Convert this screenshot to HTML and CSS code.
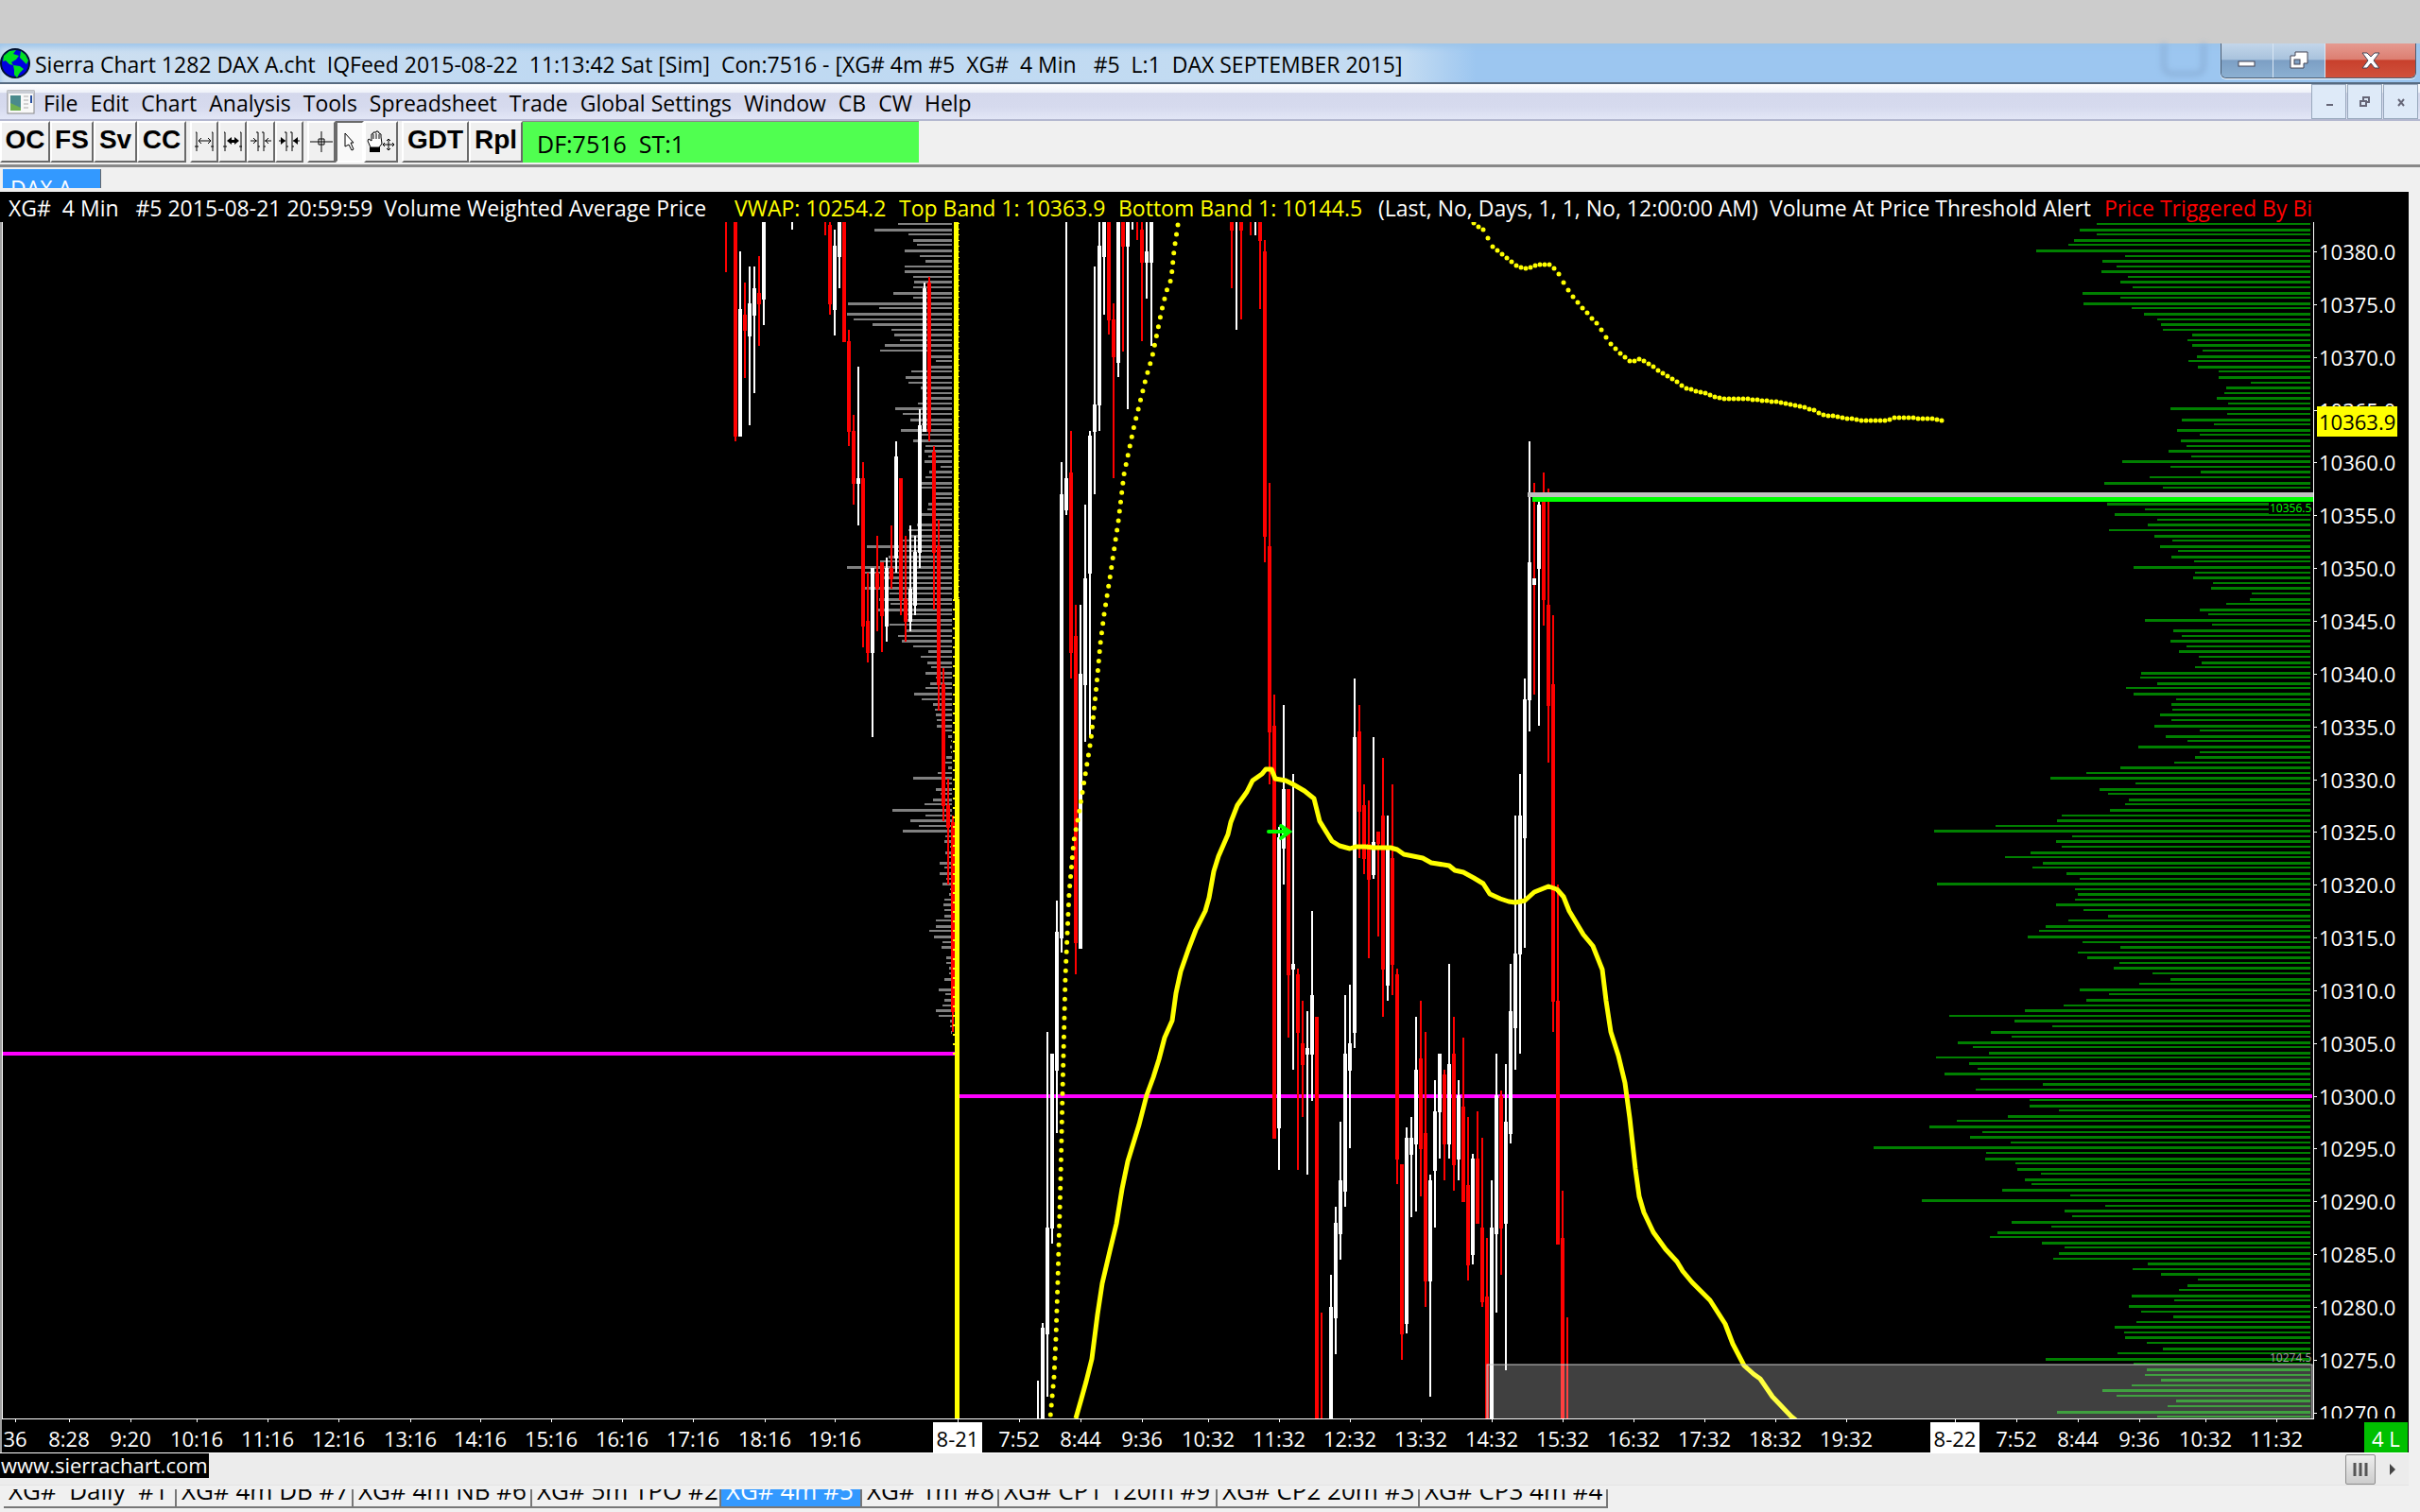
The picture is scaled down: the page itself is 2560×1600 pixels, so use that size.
FILE: index.html
```html
<!DOCTYPE html>
<html lang="en">
<head>
    <meta charset="UTF-8">
    <title>Sierra Chart - DAX A.cht</title>
    <link rel="stylesheet" href="styles.css">
</head>
<body>

    <div class="desktop-strip"></div>

    <header class="title-bar">
        <svg class="globe" viewBox="0 0 32 32">
            <circle cx="16" cy="16" r="15" fill="#0000e0" stroke="#001030" stroke-width="2"/>
            <path d="M4 8 L10 3 L17 2 L14 6 L20 8 L17 12 L12 15 L14 18 L10 17 L6 13 L3 14 Z" fill="#00e020"/>
            <path d="M22 3 L27 7 L30 13 L28 17 L24 13 L21 10 Z" fill="#00e020"/>
            <path d="M14 18 L21 19 L25 22 L21 26 L18 31 L15 28 L15 23 Z" fill="#00e020"/>
        </svg>
        <h1 class="title">Sierra Chart 1282 DAX A.cht  IQFeed 2015-08-22  11:13:42 Sat [Sim]  Con:7516 - [XG# 4m #5  XG#  4 Min   #5  L:1  DAX SEPTEMBER 2015]</h1>
        <div class="glass-shadow"></div>
        <div class="window-buttons">
            <button class="win-btn" aria-label="Minimize">
                <svg width="20" height="16"><rect x="1" y="9" width="17" height="5" fill="#fff" stroke="#445" /></svg>
            </button>
            <button class="win-btn" aria-label="Restore">
                <svg width="20" height="20"><path d="M6 1H19V13H15V18H1V5H6Z" fill="#fff" stroke="#445"/><rect x="5" y="9" width="6" height="5" fill="#7fa0c4" stroke="#445"/></svg>
            </button>
            <button class="win-btn win-close" aria-label="Close">
                <svg width="20" height="18"><path d="M1 1H6L10 5L14 1H19L13 9L19 17H14L10 12L6 17H1L7 9Z" fill="#fff" stroke="#445"/></svg>
            </button>
        </div>
    </header>

    <nav class="menu-bar">
        <svg class="doc-icon" viewBox="0 0 30 26">
            <rect x="1" y="1" width="28" height="24" fill="#f8f8f8" stroke="#888"/>
            <rect x="1" y="1" width="28" height="3" fill="#c8ccd4"/>
            <rect x="4" y="6" width="11" height="16" fill="#4a8a8c"/>
            <path d="M4 22V14L15 19V22Z" fill="#6fb050"/>
            <path d="M18 7H23M18 11H23M18 15H23M18 19H23" stroke="#aaa"/>
            <path d="M26 6V14" stroke="#2a50a0" stroke-width="2"/>
        </svg>
        <button class="menu-item">File</button>
        <button class="menu-item">Edit</button>
        <button class="menu-item">Chart</button>
        <button class="menu-item">Analysis</button>
        <button class="menu-item">Tools</button>
        <button class="menu-item">Spreadsheet</button>
        <button class="menu-item">Trade</button>
        <button class="menu-item">Global Settings</button>
        <button class="menu-item">Window</button>
        <button class="menu-item">CB</button>
        <button class="menu-item">CW</button>
        <button class="menu-item">Help</button>
        <div class="mdi-buttons">
            <button class="mdi-btn" aria-label="Minimize chart"><svg width="12" height="12"><rect x="3" y="8" width="7" height="2" fill="#667"/></svg></button>
            <button class="mdi-btn" aria-label="Restore chart"><svg width="12" height="12"><path d="M4 4V1H10V6H8M1 5H7V10H1Z" fill="none" stroke="#667" stroke-width="2"/></svg></button>
            <button class="mdi-btn" aria-label="Close chart"><svg width="12" height="12"><path d="M3 3L9 10M9 3L3 10" stroke="#667" stroke-width="2"/></svg></button>
        </div>
    </nav>

    <div class="toolbar">
        <div class="tool-group text-group">
            <button class="tool">OC</button>
            <button class="tool">FS</button>
            <button class="tool">Sv</button>
            <button class="tool">CC</button>
        </div>
        <div class="tool-group icon-group">
            <button class="tool" aria-label="Increase bar spacing">
                <svg width="20" height="22"><path d="M1 1H2V21M0 16H4M18 1H19V21M17 16H20M4 10H17M7 7L4 10L7 13M14 7L17 10L14 13" fill="none" stroke="#000"/></svg>
            </button>
            <button class="tool" aria-label="Increase bar width">
                <svg width="20" height="22"><path d="M1 1H2V21M0 16H4M18 1H19V21M17 16H20" fill="none" stroke="#000"/><path d="M4 10L9 6V9H12V6L17 10L12 14V12H9V14Z"/></svg>
            </button>
            <button class="tool" aria-label="Decrease bar spacing">
                <svg width="22" height="22"><path d="M8 1V21M6 1H8M8 16H10M14 1V21M12 1H14M14 16H16M0 10H7M3 7L6 10L3 13M22 10H15M19 7L16 10L19 13" fill="none" stroke="#000"/></svg>
            </button>
            <button class="tool" aria-label="Decrease bar width">
                <svg width="22" height="22"><path d="M8 1V21M6 1H8M8 16H10M14 1V21M12 1H14M14 16H16M0 10H7M22 10H15" fill="none" stroke="#000"/><path d="M2 6L7 10L2 14ZM20 6L15 10L20 14Z"/></svg>
            </button>
        </div>
        <div class="tool-group pointer-group">
            <button class="tool" aria-label="Crosshair">
                <svg width="24" height="22"><path d="M0 11H24M12 0V22M9 8H15V14H9Z" fill="none" stroke="#000"/></svg>
            </button>
            <button class="tool pressed" aria-label="Pointer">
                <svg width="14" height="20"><path d="M2 1L11 11H8L11 18L9 19L6 13L2 15Z" fill="#fff" stroke="#000"/></svg>
            </button>
            <button class="tool" aria-label="Hand">
                <svg width="30" height="24">
                    <path d="M4 18L1 11L2 9L5 11V4L7 3V2H10V1H12L13 3L15 4V7L16 14L13 18Z" fill="#fff" stroke="#000"/>
                    <path d="M7 4V9M10 3V9M13 4V9" stroke="#000"/>
                    <rect x="3" y="18" width="11" height="5"/>
                    <path d="M23 9V21M17 15H29M21 11L23 9L25 11M21 19L23 21L25 19M19 13L17 15L19 17M27 13L29 15L27 17" fill="none" stroke="#000"/>
                </svg>
            </button>
        </div>
        <div class="tool-group end-group">
            <button class="tool">GDT</button>
            <button class="tool">Rpl</button>
        </div>
        <div class="feed-status">DF:7516  ST:1</div>
    </div>

    <div class="book-tabs">
        <button class="book-tab">DAX A</button>
    </div>

    <main class="chart-window">
        <div class="study-line">
            <span>XG#  4 Min   #5 2015-08-21 20:59:59  Volume Weighted Average Price</span>
            <span class="band">VWAP: 10254.2</span>
            <span class="band">Top Band 1: 10363.9</span>
            <span class="band">Bottom Band 1: 10144.5</span>
            <span>(Last, No, Days, 1, 1, No, 12:00:00 AM)</span>
            <span>Volume At Price Threshold Alert</span>
            <span class="alert">Price Triggered By Bi</span>
        </div>
        <svg id="chart" class="chart" viewBox="0 235 2548 1302"></svg>
    </main>

    <div class="scroll-row">
        <a class="site-link" href="#">www.sierrachart.com</a>
        <button class="thumb" aria-label="Scroll thumb">
            <svg width="16" height="14"><path d="M2 0V14M8 0V14M14 0V14" stroke="#555" stroke-width="3"/></svg>
        </button>
        <button class="scroll-right" aria-label="Scroll right">
            <svg width="8" height="12"><path d="M1 0L7 6L1 12Z" fill="#444"/></svg>
        </button>
    </div>

    <footer class="chart-tabs">
        <button class="chart-tab">XG#  Daily  #1</button>
        <button class="chart-tab">XG# 4m DB #7</button>
        <button class="chart-tab">XG# 4m NB #6</button>
        <button class="chart-tab">XG# 5m TPO #2</button>
        <button class="chart-tab active">XG# 4m #5</button>
        <button class="chart-tab">XG# 1m #8</button>
        <button class="chart-tab">XG# CP1 120m #9</button>
        <button class="chart-tab">XG# CP2 20m #3</button>
        <button class="chart-tab">XG# CP3 4m #4</button>
    </footer>

    <script src="chart.js"></script>
</body>
</html>
```
FILE: styles.css
```css
* { box-sizing: border-box; }
body { margin: 0; background: #f0f0f0; font-family: "Open Sans", "Noto Sans", sans-serif; font-size: 23px; color: #000; overflow: hidden; }
button { font: inherit; color: inherit; margin: 0; padding: 0; border: 0; background: none; white-space: pre; }

.desktop-strip { height: 46px; background: #ccc; }

/* title bar */
.title-bar { display: flex; align-items: flex-start; height: 43px; border-bottom: 2px solid #566a80; background: linear-gradient(90deg, #cfe0f0 0, #bdd8f2 25%, #c4dcf2 58%, #9cc6f0 61%, #9cc6f0 100%); box-shadow: inset 0 4px 6px #9cc4ea; }
.globe { width: 32px; height: 32px; margin-top: 5px; flex: none; }
.title { flex: 1; margin: 0; padding-left: 5px; font-size: 23px; font-weight: normal; line-height: 45px; height: 41px; white-space: pre; overflow: hidden; }
.glass-shadow { width: 46px; height: 34px; margin-right: 16px; border: 4px solid #88acd4; border-top: 0; border-radius: 0 0 10px 10px; filter: blur(3px); }
.window-buttons { display: flex; height: 37px; margin-right: 4px; border: 1px solid #4a5c72; border-top: 0; border-radius: 0 0 6px 6px; overflow: hidden; box-shadow: 0 1px 1px #fff; }
.win-btn { display: flex; align-items: center; justify-content: center; width: 55px; border-right: 1px solid #d8e6f4; background: linear-gradient(#c3d6ea 0, #a9c3dd 46%, #7c9fc4 50%, #8cb0d2 100%); }
.win-close { width: 95px; border-right: 0; background: linear-gradient(#e59a90 0, #dc7f72 46%, #c8402c 50%, #d0513c 100%); }

/* menu */
.menu-bar { display: flex; align-items: center; gap: 13px; height: 39px; padding-left: 7px; border-bottom: 2px solid #b4b8d0; background: linear-gradient(#fff 0, #eef1f9 24%, #d4d8ec 26%, #d6daee 65%, #e2e6f6 100%); }
.doc-icon { width: 30px; height: 26px; margin-right: -4px; }
.menu-item { padding-top: 2px; line-height: 30px; }
.mdi-buttons { display: flex; align-self: stretch; gap: 1px; margin-left: auto; margin-right: 2px; }
.mdi-btn { display: flex; align-items: center; justify-content: center; width: 37px; border: 1px solid #98a8bc; background: #deeaf8; }

/* toolbar */
.toolbar { display: flex; gap: 4px; height: 49px; padding-bottom: 3px; border-bottom: 3px solid #888; }
.tool-group { display: grid; height: 44px; }
.text-group { grid-template-columns: 53px 46px 46px 52px; }
.icon-group { grid-template-columns: repeat(4, 30px); }
.pointer-group { grid-template-columns: 30px 30px 36px; }
.end-group { grid-template-columns: 71px 57px; }
.tool { display: flex; align-items: center; justify-content: center; border: 2px solid; border-color: #fff #6a6a6a #6a6a6a #fff; background: #f0f0f0; font-family: "Liberation Sans", Arial, sans-serif; font-size: 28px; font-weight: bold; line-height: 36px; }
.text-group .tool, .end-group .tool { padding-bottom: 4px; }
.pressed { border-color: #6a6a6a #fff #fff #6a6a6a; background: #f9f9f9; }
.feed-status { width: 419px; height: 44px; margin-left: -4px; padding-left: 15px; border-top: 1px solid #888; background: #50ff50; font-size: 25px; line-height: 46px; white-space: pre; }

.book-tabs { height: 26px; padding: 2px 3px 0; }
.book-tab { display: block; width: 104px; height: 20px; padding: 8px 0 0 8px; border-right: 1px solid #666; overflow: hidden; background: #3399ff; color: #fff; line-height: 24px; text-align: left; }

/* chart */
.chart-window { padding-right: 12px; }
.study-line { display: grid; grid-template-columns: 768px 174px 232px 275px 414px 354px 1fr; height: 32px; padding-left: 9px; padding-right: 103px; background: #000; color: #fff; line-height: 34px; white-space: pre; overflow: hidden; }
.study-line span { overflow: hidden; }
.band { color: #ff0; }
.alert { color: #f00; }
.chart { display: block; width: 100%; height: auto; background: #000; }
.chart text { font-size: 22px; fill: #fff; }
.chart .small { font-size: 12px; }

/* scrollbar and tabs */
.scroll-row { display: flex; height: 35px; margin-right: 12px; border-top: 1px solid #fff; border-bottom: 1px solid #e4e4e4; background: #ececec; }
.site-link { height: 26px; padding: 0 1px; margin-right: auto; background: #000; color: #fff; font-size: 22px; line-height: 24px; text-decoration: none; }
.thumb, .scroll-right { display: flex; align-items: center; justify-content: center; height: 32px; margin-top: 1px; }
.thumb { width: 32px; border: 1px solid #8c8c8c; border-radius: 2px; background: linear-gradient(#eee, #ccc); }
.scroll-right { width: 35px; }
.chart-tabs { display: grid; grid-template-columns: 183px 187px 189px 200px 149px 145px 231px 214px 199px; padding: 4px 0 4px 4px; }
.chart-tab { display: flex; align-items: flex-start; height: 20px; padding-left: 5px; border-right: 2px solid #777; border-bottom: 2px solid #777; overflow: hidden; font-size: 26px; line-height: 2px; }
.active { background: #3399ff; color: #fff; }
```
FILE: chart.js
```js
const TOP = 235;
const BOTTOM = 1501;
const STEP = 5.585; // half a point
const out = [];

function rect(x, y, w, h, fill, extra = '') {
    out.push(`<rect x="${x}" y="${y}" width="${w}" height="${h}" fill="${fill}" ${extra}/>`);
}
function text(x, y, s, attrs = '') {
    out.push(`<text x="${x}" y="${y}" ${attrs}>${s}</text>`);
}

// volume at price, one value per half point from the top down
const prevVolume = [
    171,246,138,123,111,150,102,84,150,150,123,120,123,186,123,330,231,333,312,252,
    192,183,165,213,228,66,51,66,129,147,138,99,81,81,108,180,156,132,96,162,
    96,123,84,87,75,87,36,72,84,96,96,51,51,75,78,96,51,111,138,136,
    156,270,171,201,228,333,276,221,189,276,198,231,195,234,141,141,198,146,171,159,
    123,75,99,78,66,84,51,69,84,120,96,60,54,51,48,48,21,12,3,6,
    3,18,21,12,45,123,18,51,36,60,87,189,84,132,105,156,21,24,6,21,
    9,39,24,39,18,30,6,9,24,27,24,24,51,51,72,57,30,33,0,18,
    18,9,9,24,0,42,21,24,30,51,42,6,6,3
];
const totalVolume = [
    591,638,591,653,669,758,512,575,536,578,505,525,491,630,525,627,494,460,424,413,
    408,327,340,327,298,314,337,311,254,254,165,233,238,259,228,387,230,356,267,369,
    306,358,342,392,329,520,387,303,444,570,408,470,450,562,457,541,424,450,557,431,
    382,416,366,384,322,489,319,324,269,275,162,167,233,306,282,457,272,379,356,387,
    342,363,309,301,319,468,471,424,510,489,371,384,382,416,384,431,306,400,340,476,
    306,319,376,525,620,719,484,583,559,502,512,554,687,701,870,1040,659,703,687,774,
    844,740,768,674,638,1032,651,643,651,703,627,559,669,732,750,782,630,525,643,617,
    528,544,437,387,473,638,557,620,682,789,998,818,714,883,826,975,933,889,1035,944,
    920,1012,912,740,925,925,776,776,695,836,978,1053,907,941,829,1208,897,899,816,810,
    745,789,771,852,664,1074,567,680,659,826,716,865,886,742,680,695,711,450,491,413,
    311,340,363,494,376,502,468,379,481,541,515,512,452,408,533,732,489,452,457,413,
    494,575,536,371,395,701,424
];
function profile(values, right, unit, color) {
    values.forEach((v, i) => {
        const w = Math.round(v / unit);
        rect(right - w, Math.round(236 + i * STEP), w, i % 2 ? 3 : 2, color);
    });
}

// x, high, body top, body bottom, low
const up = [
    [783,266,327,462,462],[793,282,321,356,450],
    [798,282,305,334,416],[808,235,235,317,344],[838,235,0,0,243],[883,243,260,328,355],
    [888,235,235,272,305],[908,388,506,512,556],[923,601,601,691,780],[938,590,601,663,679],
    [948,467,483,591,606],[963,556,623,658,668],[968,567,584,641,651],[973,433,450,585,601],
    [978,299,305,457,457],
    [1098,1461,0,0,1501],[1103,1400,1405,1501,1501],[1108,1092,1299,1412,1478],
    [1113,1115,1115,1300,1316],[1118,953,986,1133,1199],[1123,489,523,993,1008],
    [1128,235,506,540,545],[1143,640,713,1004,1004],[1148,534,612,725,785],
    [1153,456,461,607,780],[1158,282,428,457,523],[1163,235,260,429,456],
    [1168,235,235,272,333],[1183,235,235,384,399],[1193,235,235,261,433],
    [1198,235,0,0,243],[1213,235,266,278,316],[1218,235,235,278,366],
    [1308,235,0,0,349],[1328,235,0,0,249],[1353,875,886,1194,1238],
    [1358,746,835,898,936],[1368,819,1020,1026,1132],[1383,1070,1109,1116,1243],
    [1388,964,1053,1116,1165],[1408,1349,1383,1501,1501],[1413,1277,1294,1395,1433],
    [1418,1187,1249,1306,1333],[1423,1053,1115,1261,1277],[1428,1042,1104,1133,1215],
    [1433,718,780,1093,1109],[1453,780,891,926,930],[1468,863,898,1043,1059],
    [1488,1193,1204,1401,1411],[1493,1182,1204,1222,1288],[1498,1076,1132,1211,1282],
    [1513,1243,1249,1356,1478],[1518,1143,1176,1239,1299],[1523,1115,1115,1177,1226],
    [1533,1020,1126,1211,1226],[1543,1143,1159,1227,1249],[1558,1221,1226,1328,1338],
    [1578,1249,1299,1501,1501],[1583,1115,1159,1306,1389],[1593,1126,1187,1295,1450],
    [1598,1020,1070,1200,1210],[1603,863,1009,1088,1132],[1608,819,863,1010,1115],
    [1613,718,740,887,1003],[1618,467,595,741,774],[1628,531,534,602,768]
];
const down = [
    [768,235,0,0,288],[778,235,235,462,467],[788,299,333,350,400],[803,271,310,322,366],
    [873,235,0,0,249],[878,235,238,322,333],[893,235,235,362,362],[898,349,361,457,472],
    [903,439,456,512,534],[913,489,506,663,685],[918,606,657,691,701],[928,567,606,623,668],
    [933,595,595,652,690],[943,556,601,613,623],[953,506,506,635,651],[958,567,634,658,679],
    [983,293,299,457,467],[988,472,478,585,645],[993,550,578,725,752],[998,707,724,853,869],
    [1003,824,852,876,936],[1008,863,870,1071,1092],
    [1133,456,500,691,718],[1138,640,673,998,1031],[1173,235,235,339,354],
    [1178,321,338,378,506],[1188,235,235,261,372],[1203,235,0,0,254],[1208,235,243,278,361],
    [1303,235,235,244,305],[1313,235,235,244,338],[1323,235,0,0,249],[1333,235,235,255,327],
    [1338,254,266,568,595],[1343,511,578,775,830],[1348,735,768,1205,1205],
    [1363,835,835,1032,1098],[1373,1025,1031,1093,1238],[1378,1059,1104,1127,1182],
    [1393,1076,1076,1501,1501],[1398,1389,0,0,1501],[1438,746,774,859,908],
    [1443,830,852,909,925],[1448,847,893,931,1014],[1458,880,880,893,991],
    [1463,802,863,1026,1076],[1473,830,908,1021,1053],[1478,1025,1031,1227,1253],
    [1483,1232,1232,1412,1439],[1503,1059,1120,1216,1266],[1508,1092,1199,1356,1383],
    [1528,1132,1137,1211,1249],[1538,1076,1115,1233,1260],[1548,1098,1171,1272,1272],
    [1553,1182,1254,1339,1355],[1563,1176,1226,1295,1295],[1568,1204,1299,1378,1383],
    [1573,1310,1372,1501,1501],[1588,1154,1160,1300,1349],[1623,511,0,0,735],
    [1633,500,527,635,662],[1638,517,640,747,807],[1643,651,724,1060,1092],
    [1648,936,1059,1317,1317],[1653,1260,1310,1501,1501],[1658,1394,0,0,1501]
];
function candles(list, color) {
    for (const [x, high, top, bottom, low] of list) {
        rect(x - 1, high, 2, low - high, color);
        if (top) rect(x - 2, top, 4, bottom - top, color);
    }
}

const vwap = [
    [1138,1501],[1144,1480],[1149,1462],[1155,1438],[1161,1391],[1166,1358],[1174,1324],[1181,1295],[1187,1258],
    [1193,1229],[1205,1190],[1213,1159],[1220,1140],[1226,1121],[1232,1098],[1240,1080],[1244,1051],
    [1249,1028],[1257,1005],[1265,984],[1275,964],[1279,950],[1284,922],[1289,906],[1299,883],
    [1302,870],[1309,852],[1319,838],[1325,826],[1335,819],[1339,814],[1345,814],[1349,824],
    [1360,826],[1368,830],[1380,837],[1390,845],[1396,869],[1409,890],[1417,895],[1428,898],
    [1434,896],[1444,896],[1453,897],[1471,897],[1478,899],[1485,904],[1505,908],[1514,913],
    [1533,916],[1539,921],[1548,923],[1559,929],[1569,935],[1576,946],[1587,951],[1596,954],
    [1603,955],[1613,953],[1623,944],[1638,938],[1647,941],[1654,949],[1660,964],[1669,979],
    [1675,989],[1685,1001],[1695,1026],[1699,1059],[1704,1092],[1712,1117],[1719,1146],[1724,1183],
    [1730,1237],[1734,1266],[1739,1283],[1749,1304],[1762,1322],[1774,1335],[1780,1345],[1790,1357],
    [1809,1376],[1825,1401],[1833,1422],[1845,1445],[1855,1454],[1862,1459],[1875,1478],[1895,1499],[1900,1503]
];
const bandLeft = [
    [1246,238],[1242,265],[1239,295],[1234,308],[1229,328],[1219,377],[1212,401],[1199,454],[1189,502],
    [1183,552],[1174,612],[1168,650],[1164,681],[1160,725],[1154,783],[1149,814],[1141,863],[1136,889],
    [1131,945],[1127,1034],[1124,1156],[1122,1246],[1119,1355],[1117,1416],[1115,1457],[1111,1500]
];
const bandRight = [
    [1559,236],[1570,244],[1579,261],[1595,274],[1604,281],[1614,284],[1629,280],[1640,280],[1649,290],
    [1659,307],[1665,315],[1675,327],[1689,342],[1704,364],[1714,374],[1725,383],[1735,380],[1750,389],
    [1769,401],[1784,411],[1804,416],[1815,420],[1825,422],[1848,422],[1869,424],[1890,427],[1909,431],
    [1919,434],[1929,439],[1950,442],[1969,445],[1994,445],[2004,442],[2045,443],[2055,445]
];
function line(points, extra) {
    out.push(`<polyline points="${points.join(' ')}" fill="none" stroke="#ff0" ${extra}/>`);
}
// one dot per bar
function dots(points) {
    let i = 0;
    for (let x = points[0][0]; x <= points[points.length - 1][0]; x += 5) {
        while (points[i + 1][0] < x) i++;
        const [x0, y0] = points[i];
        const [x1, y1] = points[i + 1];
        const y = y0 + (y1 - y0) * (x - x0) / (x1 - x0);
        out.push(`<ellipse cx="${x}" cy="${Math.round(y)}" rx="2.5" ry="2.5" fill="#ff0"/>`);
    }
}

out.push(`<clipPath id="plot"><rect x="3" y="${TOP}" width="2444" height="${BOTTOM - TOP}"/></clipPath>`);
out.push('<g clip-path="url(#plot)">');
rect(3, 1113, 1007, 4, '#f0f');
rect(1015, 1158, 1431, 4, '#f0f');
profile(prevVolume, 1007, 3, '#808080');
profile(totalVolume, 2444, 2.613, '#008000');
rect(1960, 1158, 486, 4, '#f0f');
candles(up, '#fff');
candles(down, '#f00');
rect(1621, 612, 4, 7, '#fff');
rect(1009, TOP, 5, 399, '#ff0');
rect(1010, 634, 5, 867, '#ff0');
line([[1014, 236], [1014, 634]], 'stroke-width="2" stroke-dasharray="1 5"');
line([[1009, 634], [1009, 1120]], 'stroke-width="2" stroke-dasharray="2 8"');
line(bandLeft, 'stroke-width="5" stroke-linecap="round" stroke-dasharray="0 10"');
dots(bandRight);
line(vwap, 'stroke-width="5" stroke-linejoin="round"');
out.push('<path d="M1342 880H1362M1355 874L1364 880L1355 887" fill="none" stroke="#0f0" stroke-width="4" stroke-linecap="round"/>');
rect(1616, 521, 831, 5, '#c0c0c0');
rect(1621, 526, 826, 5, '#0f0');
rect(1573, 1444, 873, 58, '#fff', 'fill-opacity="0.25" stroke="#ccc"');
rect(1576, 1445, 4, 56, '#fff');
rect(2400, 532, 46, 12, '#000');
text(2401, 542, '10356.5', 'class="small" style="fill:#0f0"');
text(2401, 1441, '10274.5', 'class="small" style="fill:#a0a0a0"');
out.push('</g>');

// axes
rect(2447, TOP, 1, 1267, '#fff');
rect(3, BOTTOM, 2445, 1, '#fff');
rect(2, TOP, 1, 1267, '#fff');
rect(0, TOP, 2, 1302, '#a0a0a0');
out.push(`<clipPath id="scale"><rect x="2447" y="${TOP}" width="101" height="${BOTTOM - TOP}"/></clipPath>`);
out.push('<g clip-path="url(#scale)">');
for (let p = 10380; p >= 10270; p -= 5) {
    const y = Math.round(266 + (10380 - p) * 2 * STEP);
    rect(2447, y, 4, 1, '#fff');
    text(2453, y + 9, p.toFixed(1));
}
out.push('</g>');
rect(2451, 430, 85, 32, '#ff0');
text(2453, 455, '10363.9', 'style="fill:#000"');

const times = [
    [16,'36'],[73,'8:28'],[138,'9:20'],[208,'10:16'],[283,'11:16'],[358,'12:16'],[434,'13:16'],
    [508,'14:16'],[583,'15:16'],[658,'16:16'],[733,'17:16'],[809,'18:16'],[883,'19:16'],
    [1013,'8-21'],[1078,'7:52'],[1143,'8:44'],[1208,'9:36'],[1278,'10:32'],[1353,'11:32'],
    [1428,'12:32'],[1503,'13:32'],[1578,'14:32'],[1653,'15:32'],[1728,'16:32'],[1803,'17:32'],
    [1878,'18:32'],[1953,'19:32'],[2068,'8-22'],[2133,'7:52'],[2198,'8:44'],[2263,'9:36'],
    [2333,'10:32'],[2408,'11:32']
];
for (const [x, label] of times) {
    const day = label.includes('-');
    rect(x, BOTTOM, 1, 4, '#fff');
    if (day) rect(x - 26, 1505, 52, 32, '#fff');
    text(x, 1531, label, `text-anchor="middle" ${day ? 'style="fill:#000"' : ''}`);
}
rect(2501, 1505, 46, 32, '#00c000');
text(2509, 1531, '4 L');

document.getElementById('chart').innerHTML = out.join('');
```
